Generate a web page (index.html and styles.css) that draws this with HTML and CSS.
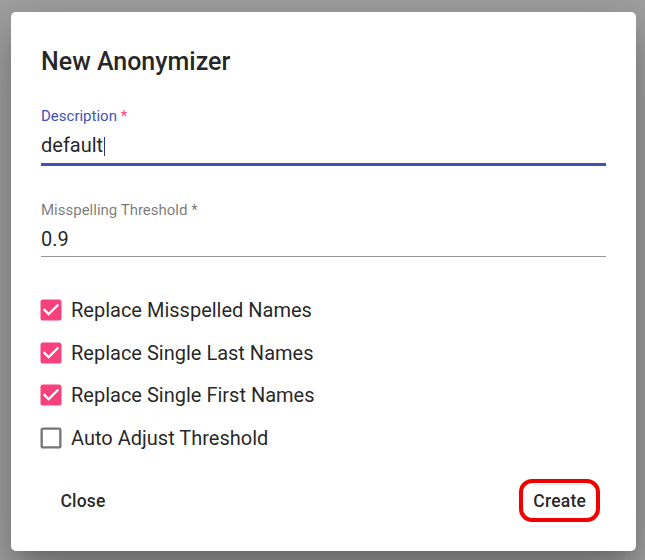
FILE: index.html
```html
<!DOCTYPE html>
<html>
<head>
<meta charset="utf-8">
<link rel="stylesheet" href="styles.css">
</head>
<body>
<div class="dialog">
  <h2 class="title">New Anonymizer</h2>
  <div class="content">
    <div class="field focused">
      <label class="label">Description<span class="req"> *</span></label>
      <div class="input">default<span class="caret"></span></div>
    </div>
    <div class="field second">
      <label class="label">Misspelling Threshold<span class="req"> *</span></label>
      <div class="input">0.9</div>
    </div>
    <div class="checks">
      <div class="check">
        <svg class="box checked" viewBox="0 0 24 24"><path d="M19 3H5c-1.11 0-2 .9-2 2v14c0 1.1.89 2 2 2h14c1.11 0 2-.9 2-2V5c0-1.1-.89-2-2-2zm-9 14l-5-5 1.41-1.41L10 14.170l7.59-7.59L19 8l-9 9z"/></svg>
        <span class="check-label">Replace Misspelled Names</span>
      </div>
      <div class="check">
        <svg class="box checked" viewBox="0 0 24 24"><path d="M19 3H5c-1.11 0-2 .9-2 2v14c0 1.1.89 2 2 2h14c1.11 0 2-.9 2-2V5c0-1.1-.89-2-2-2zm-9 14l-5-5 1.41-1.41L10 14.17l7.59-7.59L19 8l-9 9z"/></svg>
        <span class="check-label">Replace Single Last Names</span>
      </div>
      <div class="check">
        <svg class="box checked" viewBox="0 0 24 24"><path d="M19 3H5c-1.11 0-2 .9-2 2v14c0 1.1.89 2 2 2h14c1.11 0 2-.9 2-2V5c0-1.1-.89-2-2-2zm-9 14l-5-5 1.41-1.41L10 14.17l7.59-7.59L19 8l-9 9z"/></svg>
        <span class="check-label">Replace Single First Names</span>
      </div>
      <div class="check">
        <svg class="box blank" viewBox="0 0 24 24"><path d="M19 5v14H5V5h14m0-2H5c-1.1 0-2 .9-2 2v14c0 1.1.9 2 2 2h14c1.1 0 2-.9 2-2V5c0-1.1-.9-2-2-2z"/></svg>
        <span class="check-label">Auto Adjust Threshold</span>
      </div>
    </div>
  </div>
  <div class="actions">
    <button class="btn">Close</button>
    <button class="btn highlight">Create</button>
  </div>
</div>
</body>
</html>
```

FILE: styles.css
```css
html, body {
  margin: 0;
  padding: 0;
}
body {
  background: #a1a1a1;
  width: 645px;
  height: 560px;
  overflow: hidden;
  font-family: Roboto, "Liberation Sans", sans-serif;
  color: rgba(0, 0, 0, 0.87);
}
.dialog {
  margin: 12px 0 0 11px;
  width: 625px;
  height: 539px;
  box-sizing: border-box;
  background: #fff;
  border-radius: 5px;
  box-shadow: 0 14px 19px -9px rgba(0,0,0,0.2), 0 30px 48px 4px rgba(0,0,0,0.14), 0 11px 58px 10px rgba(0,0,0,0.12);
  display: flex;
  flex-direction: column;
}
.title {
  margin: 0;
  padding: 30px 30px 0 30px;
  font-size: 25px;
  font-weight: 500;
  line-height: 40px;
}
.content {
  padding: 0 30px;
}
.field {
  display: flex;
  flex-direction: column;
  margin-top: 24px;
}
.field.second {
  margin-top: 34px;
}
.label {
  font-size: 15px;
  line-height: 20px;
  height: 20px;
  color: rgba(0, 0, 0, 0.54);
}
.focused .label {
  color: #3f51b5;
}
.focused .req {
  color: #ff4081;
}
.input {
  margin-top: 7px;
  font-size: 20px;
  line-height: 24px;
  padding-bottom: 5px;
  border-bottom: 1px solid #949494;
  display: flex;
  align-items: center;
}
.focused .input {
  padding-bottom: 6px;
  border-bottom: 3px solid #3f51b5;
}
.caret {
  display: inline-block;
  width: 1px;
  height: 19px;
  background: #2a3683;
  margin-left: 1px;
  margin-top: 2px;
}
.checks {
  margin-top: 32px;
  display: flex;
  flex-direction: column;
}
.check {
  height: 42.5px;
  display: flex;
  align-items: center;
  margin-left: -4.5px;
}
.box {
  width: 28px;
  height: 28px;
  flex: none;
}
.box.checked {
  fill: #f7417d;
}
.box.blank {
  fill: #757575;
}
.check-label {
  margin-left: 6.5px;
  font-size: 20px;
  line-height: 24px;
}
.actions {
  margin-top: 20px;
  padding: 0 36px 0 32px;
  display: flex;
  justify-content: space-between;
}
.btn {
  min-width: 80px;
  height: 43px;
  padding: 0 10px;
  border: 4px solid transparent;
  background: transparent;
  font-family: Roboto, "Liberation Sans", sans-serif;
  font-size: 17.5px;
  font-weight: 500;
  color: rgba(0, 0, 0, 0.87);
  letter-spacing: 0.2px;
  box-sizing: border-box;
}
.btn.highlight {
  border-color: #f00000;
  border-radius: 13px;
}
```
